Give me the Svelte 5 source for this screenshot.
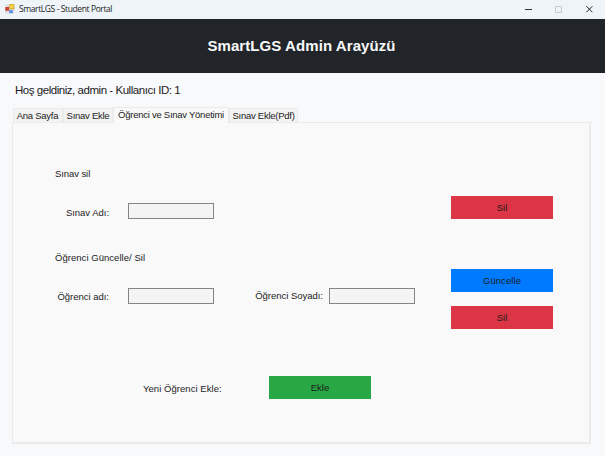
<script>
  const tabs = [
    { label: 'Ana Sayfa', kind: 'home' },
    { label: 'Sınav Ekle', kind: 'exam' },
    { label: 'Öğrenci ve Sınav Yönetimi', kind: 'manage' },
    { label: 'Sınav Ekle(Pdf)', kind: 'pdf' }
  ];
  let active = $state('manage');
  let examName = $state('');
  let firstName = $state('');
  let lastName = $state('');
</script>

<div class="window">
  <div class="titlebar">
    <svg class="app-icon" width="10" height="10" viewBox="0 0 10 10">
      <rect x="0" y="0.5" width="9.5" height="9" fill="#dcdfe3" />
      <rect x="0.3" y="3" width="3.7" height="3.8" fill="#c94436" />
      <rect x="4.3" y="0.2" width="5" height="5" fill="#d49b16" />
      <rect x="5" y="0.9" width="3.5" height="3.5" fill="#fbd34a" />
      <rect x="4.2" y="6" width="3.6" height="3.3" fill="#5c91e4" />
    </svg>
    <span class="caption">SmartLGS - Student Portal</span>
    <svg class="controls" width="70" height="10" viewBox="0 0 70 10">
      <path d="M1 5.5h7" stroke="#333" stroke-width="1" />
      <rect x="31.5" y="2.5" width="6" height="6" rx="0.5" fill="none" stroke="#c5c9cc" />
      <path d="M62.4 2.2l6 6M68.4 2.2l-6 6" stroke="#222" stroke-width="1" />
    </svg>
  </div>
  <header><h1>SmartLGS Admin Arayüzü</h1></header>
  <p class="welcome">Hoş geldiniz, admin - Kullanıcı ID: 1</p>
  <nav>
    {#each tabs as tab}
      <button class="tab {tab.kind}" class:active={active === tab.kind} onclick={() => (active = tab.kind)}>{tab.label}</button>
    {/each}
  </nav>
  <main>
    <h2 class="exam-title">Sınav sil</h2>
    <div class="row exam-row">
      <label for="exam">Sınav Adı:</label>
      <input id="exam" bind:value={examName} />
      <button class="action red">Sil</button>
    </div>
    <h2 class="student-title">Öğrenci Güncelle/ Sil</h2>
    <div class="row student-row">
      <label for="first">Öğrenci adı:</label>
      <input id="first" bind:value={firstName} />
      <label class="surname" for="last">Öğrenci Soyadı:</label>
      <input id="last" bind:value={lastName} />
      <div class="stack">
        <button class="action blue">Güncelle</button>
        <button class="action red">Sil</button>
      </div>
    </div>
    <div class="row add-row">
      <span>Yeni Öğrenci Ekle:</span>
      <button class="action green">Ekle</button>
    </div>
  </main>
</div>

<style>
  :global(body) { margin: 0; overflow: hidden; }
  * { box-sizing: border-box; }
  .window {
    width: 605px;
    height: 456px;
    display: flex;
    flex-direction: column;
    background: #f8f9fb;
    color: #1c1c1c;
    font: 9.5px/12px "Liberation Sans", Arial, sans-serif;
    white-space: nowrap;
  }
  .titlebar {
    height: 19px;
    flex: none;
    display: flex;
    align-items: center;
    padding: 0 11px 2px 5px;
    background: #eff4f9;
  }
  .caption { margin-left: 4px; font: 8.5px/12px "Open Sans", sans-serif; letter-spacing: -0.4px; }
  .controls { margin-left: auto; }
  header {
    height: 54px;
    flex: none;
    display: flex;
    align-items: center;
    justify-content: center;
    background: #212529;
    color: #f8f9fa;
  }
  h1 { margin: 0 0 0 -2px; font-size: 15px; line-height: 18px; font-weight: 700; letter-spacing: 0.08px; }
  .welcome { margin: 10px 0 0 15px; font-size: 11.5px; line-height: 15px; letter-spacing: -0.46px; }
  nav { display: flex; align-items: flex-start; height: 15px; margin: 9px 0 0 13px; }
  button { font: inherit; color: inherit; white-space: nowrap; }
  .tab {
    height: 14px;
    margin-top: 1px;
    padding: 1px 0 0;
    border: 1px solid #ebebeb;
    border-bottom: 0;
    background: #f3f3f3;
    text-align: center;
    letter-spacing: -0.26px;
  }
  .home, .exam { width: 50px; }
  .home { padding-right: 1px; }
  .manage { width: 116px; }
  .pdf { width: 69px; }
  .tab.active {
    position: relative;
    height: 16px;
    margin-top: 0;
    padding: 0 0 1px;
    background: #f9f9f9;
    letter-spacing: -0.26px;
  }
  main {
    width: 579px;
    height: 322px;
    margin-left: 12px;
    border: 1px solid #ebebeb;
    border-right-width: 2px;
    border-bottom-width: 2px;
    background: #f9f9f9;
    padding: 45px 36px 0 42px;
  }
  h2 { margin: 0; font: inherit; }
  .row { display: flex; align-items: flex-start; }
  .exam-title { letter-spacing: -0.08px; }
  .exam-row { height: 23px; margin-top: 16px; }
  .row label { width: 54px; text-align: right; margin-top: 11px; letter-spacing: -0.02px; }
  input {
    width: 86px;
    height: 16px;
    margin: 7px 0 0 19px;
    padding: 0 3px;
    border: 1px solid #858585;
    background: #f4f4f4;
    font: inherit;
  }
  .action { width: 102px; height: 23px; padding: 0; border: 0; }
  .red { background: #dc3545; }
  .blue { background: #007bff; letter-spacing: 0.08px; }
  .green { background: #28a745; }
  .exam-row .action, .stack { margin-left: auto; }
  .student-title { margin-top: 33px; letter-spacing: 0.04px; }
  .student-row { height: 60px; margin-top: 5px; }
  .student-row label { margin-top: 22px; }
  .student-row input { margin-top: 19px; }
  .row .surname { width: 68px; margin-left: 41px; margin-top: 21px; }
  .surname + input { margin-left: 6px; }
  .stack { display: flex; flex-direction: column; gap: 14px; }
  .add-row { margin: 47px 0 0 88px; }
  .add-row span { width: 80px; margin: 7px 46px 0 0; letter-spacing: 0.05px; }
</style>
